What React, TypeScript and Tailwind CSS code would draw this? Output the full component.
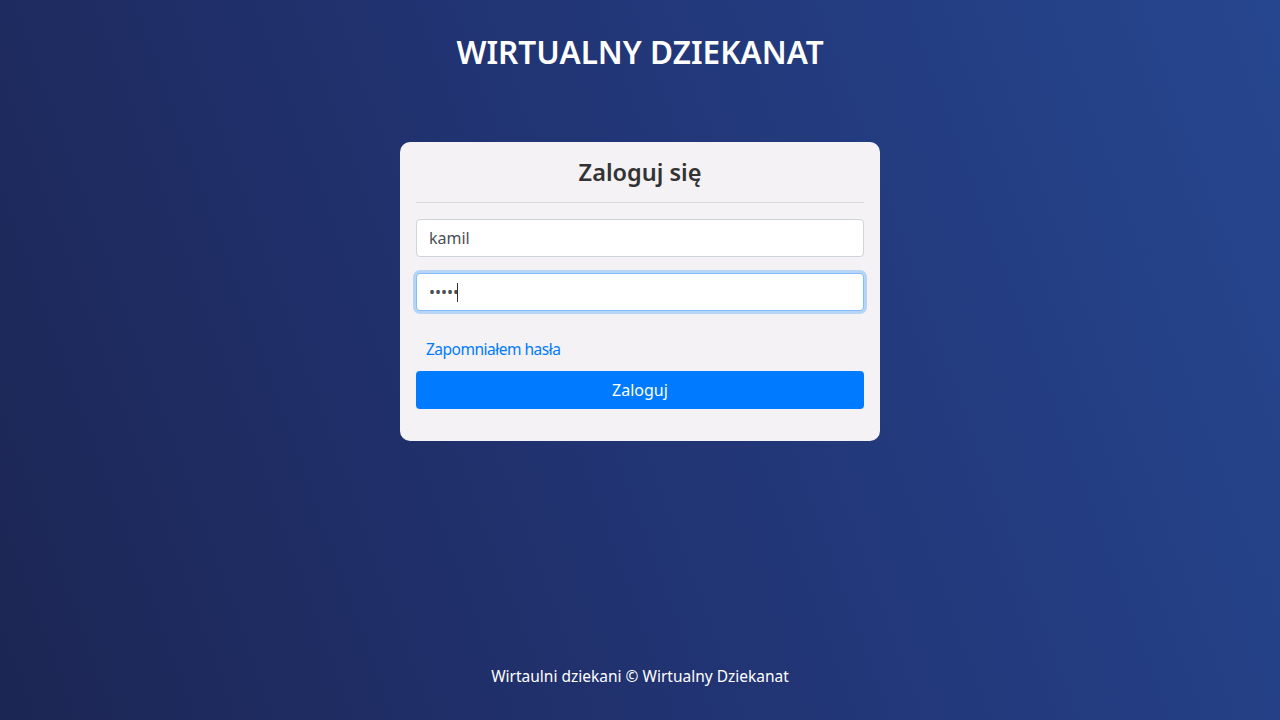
import React, { useState } from 'react';

const App: React.FC = () => {
  const [login, setLogin] = useState('kamil');
  const [password, setPassword] = useState('kamil');

  return (
    <div
      className="min-h-screen w-full flex flex-col items-center bg-[linear-gradient(70deg,#1c2654_0%,#213372_45%,#26468f_100%)] text-white"
      style={{ fontFamily: '"Noto Sans", "Open Sans", sans-serif' }}
    >
      <header className="pt-8">
        <h1 className="text-[31.5px] leading-[40px] font-semibold">WIRTUALNY DZIEKANAT</h1>
      </header>

      <main className="mt-[70px] w-[480px] rounded-[10px] bg-[#f4f2f5] px-4 pt-4 pb-8 text-[#212529]">
        <h2 className="text-center text-[23.5px] leading-[29px] font-semibold text-[#333333]">Zaloguj się</h2>
        <hr className="mt-[15px] mb-4 border-t border-[#d9d7dc]" />

        <form onSubmit={e => e.preventDefault()}>
          <input
            type="text"
            value={login}
            onChange={e => setLogin(e.target.value)}
            className="block w-full h-[38px] rounded-[4px] border border-[#ced4da] bg-white px-3 text-[16px] text-[#495057] outline-none"
          />
          <div className="relative mt-4">
            <input
              type="password"
              value={password}
              onChange={e => setPassword(e.target.value)}
              className="block w-full h-[38px] rounded-[4px] border border-[#80bdff] bg-white px-3 text-[16px] text-[#495057] outline-none shadow-[0_0_0_3px_rgba(0,123,255,0.25)]"
            />
            <span className="absolute left-[41px] top-[10px] h-[19px] w-px bg-[#333]" />
          </div>

          <div className="mt-[26px] pl-[10px]">
            <a href="#" className="text-[15.5px] leading-6 tracking-[-0.5px] text-[#007bff]">Zapomniałem hasła</a>
          </div>

          <button
            type="submit"
            className="mt-[10px] block w-full h-[38px] rounded-[4px] bg-[#007bff] text-[16px] text-white"
          >
            Zaloguj
          </button>
        </form>
      </main>

      <footer className="mt-auto pb-[32px]">
        <p className="text-[15.5px] leading-6 text-white">Wirtaulni dziekani © Wirtualny Dziekanat</p>
      </footer>
    </div>
  );
};

export default App;
